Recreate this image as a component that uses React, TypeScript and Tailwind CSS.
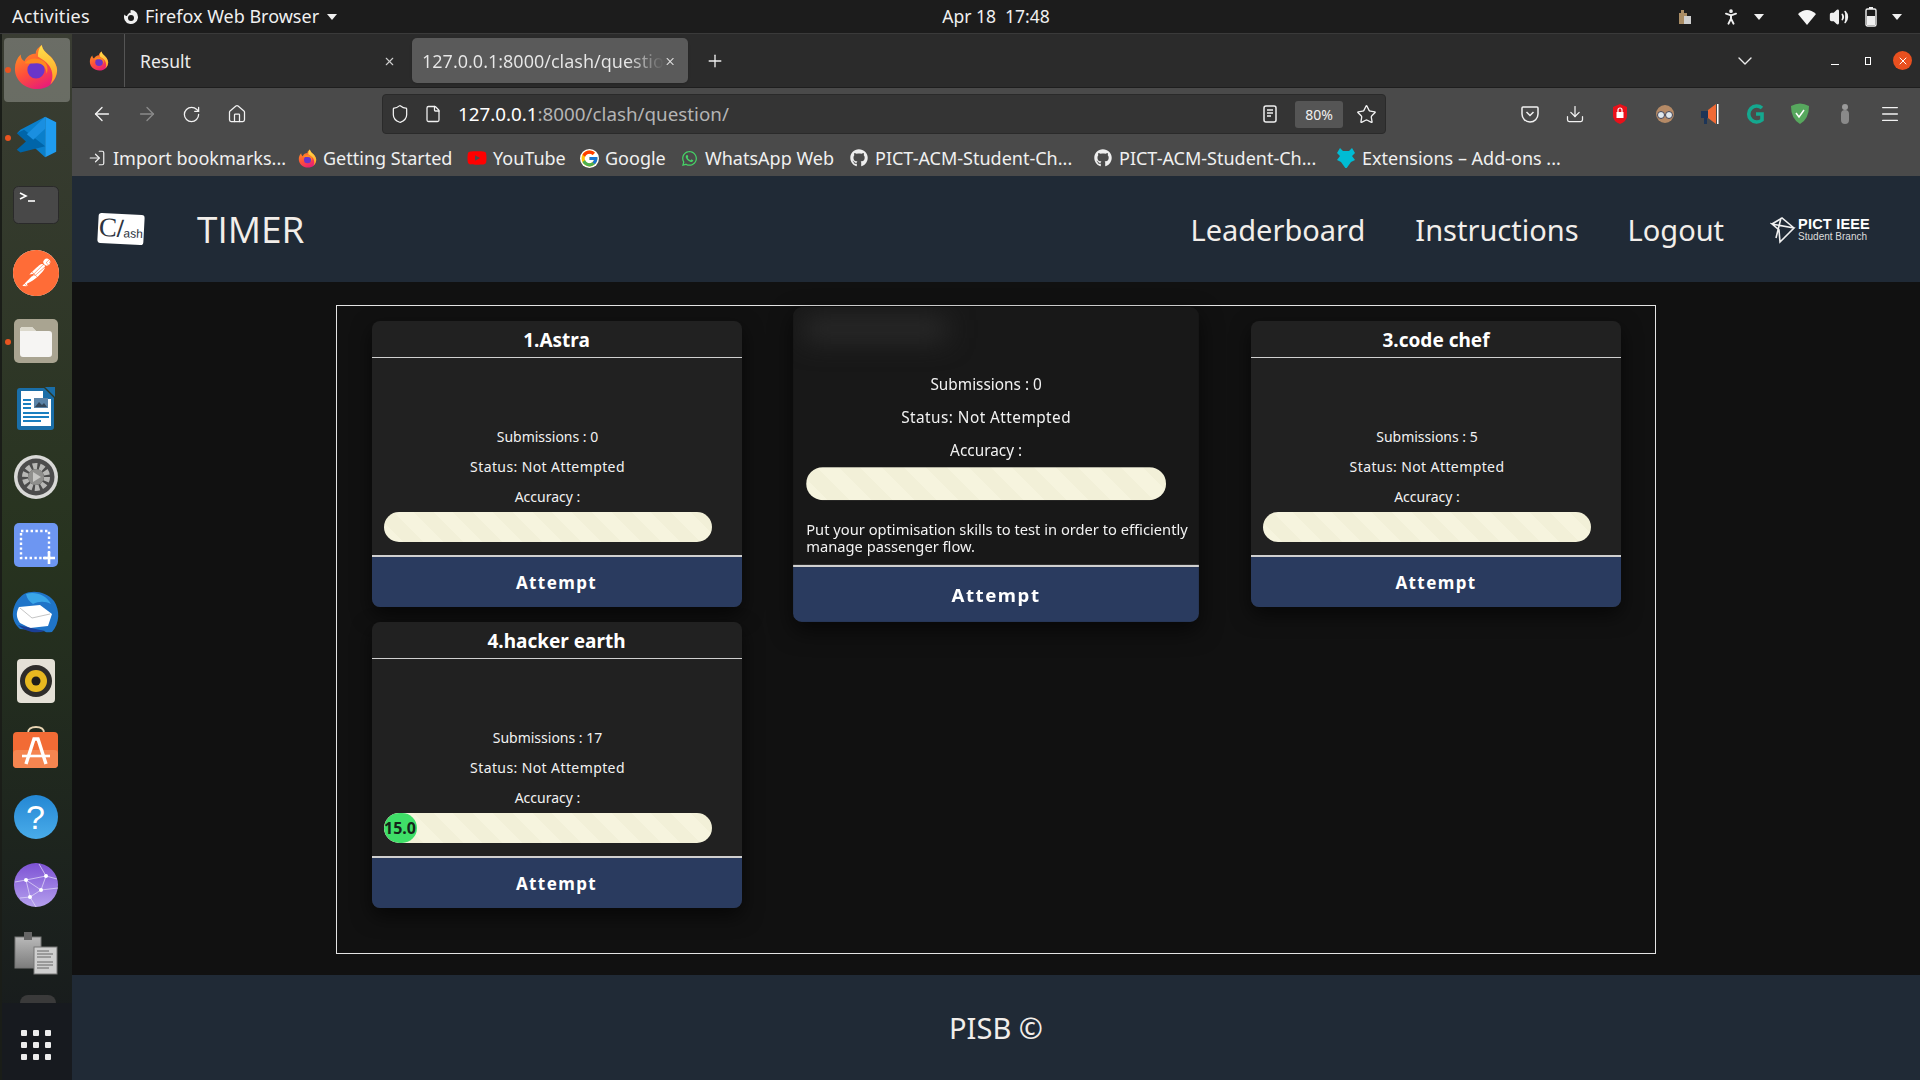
import React from 'react';
import { ArrowLeft, ArrowRight, ChevronDown, Download, File, Home, LogIn, Menu, PersonStanding, Plus, RotateCw, Shield, Star, Volume2, X } from 'lucide-react';
import { FaGithub, FaWhatsapp, FaYoutube } from 'react-icons/fa';
import { FcGoogle } from 'react-icons/fc';
import { SiPostman } from 'react-icons/si';

const Firefox: React.FC<{ size: number }> = ({ size }) => (
  <svg width={size} height={size} viewBox="0 0 48 48">
    <defs>
      <linearGradient id="ffBody" x1="0.2" y1="0" x2="0.7" y2="1">
        <stop offset="0" stopColor="#ff9a1f" />
        <stop offset="0.55" stopColor="#ff4f3a" />
        <stop offset="1" stopColor="#e6197c" />
      </linearGradient>
      <linearGradient id="ffFlame" x1="0.5" y1="0" x2="0.5" y2="1">
        <stop offset="0" stopColor="#ffe14d" />
        <stop offset="1" stopColor="#ff9a1f" />
      </linearGradient>
    </defs>
    <path d="M30 1c1 6 5 8 9 12 5 5 7 11 7 14 0 12-9 20-21 20S2 38 2 26c0-6 2-11 6-15 0 4 2 6 4 7 2-5 7-8 12-8-1-3 2-6 6-9z" fill="url(#ffBody)" />
    <path d="M30 1c1 6 5 8 9 12 5 5 7 11 7 14 0 6-3 11-7 15 3-5 3-13-1-19-3-5-8-7-12-10 0-5 1-9 4-12z" fill="url(#ffFlame)" />
    <circle cx="24" cy="27" r="9" fill="#6a35c9" />
    <path d="M12 20c4-5 13-7 20-2 4 3 5 9 3 13 0-6-4-11-10-11-5 0-9 1-13 0z" fill="#ff8a1f" />
  </svg>
);

const VsCode = () => (
  <svg width="44" height="44" viewBox="0 0 48 48">
    <path d="M34 2 46 8v32l-12 6z" fill="#1f9cf0" />
    <path d="M34 2v44L4 19l-3 3 0 0 6-6z" fill="#0a7fcb" />
    <path d="M34 34 11 16 3 20l10 9-10 9 4 3z" fill="#0065a9" />
    <path d="M34 2 14 21l7 6L34 15z" fill="#1a8fe0" />
  </svg>
);

const Terminal = () => (
  <svg width="46" height="38" viewBox="0 0 46 38">
    <rect x="0.5" y="0.5" width="45" height="37" rx="5" fill="#484848" stroke="#2a2a2a" />
    <path d="M7 7l6 3-6 3" fill="none" stroke="#fff" strokeWidth="1.6" />
    <path d="M15 15h7" stroke="#fff" strokeWidth="1.6" />
  </svg>
);

const Postman = () => (
  <div className="w-[46px] h-[46px] rounded-full bg-white flex items-center justify-center">
    <SiPostman size={46} color="#ff6c37" />
  </div>
);

const Files = () => (
  <svg width="44" height="44" viewBox="0 0 44 44">
    <rect width="44" height="44" rx="5" fill="#a9a491" />
    <path d="M6 11q0-3 3-3h9l4 4h13q3 0 3 3v20q0 3-3 3H9q-3 0-3-3z" fill="#f6f5f3" />
    <path d="M6 12q0-4 3-4h9l4 4z" fill="#dcd9cc" />
  </svg>
);

const Writer = () => (
  <svg width="38" height="44" viewBox="0 0 38 44">
    <path d="M3 1h24l10 10v29q0 3-3 3H3q-3 0-3-3V4q0-3 3-3z" fill="#1a6ea8" />
    <path d="M4 4h22v8h8v27H4z" fill="#fff" />
    <path d="M28 0h10v10z" fill="#1a6ea8" />
    <rect x="6" y="12" width="8" height="2" fill="#1a7fc0" />
    <rect x="6" y="16" width="8" height="2" fill="#1a7fc0" />
    <rect x="6" y="20" width="8" height="2" fill="#1a7fc0" />
    <rect x="17" y="11" width="14" height="10" fill="#5b84a8" />
    <path d="M18 20l4-5 3 3 2-2 3 4z" fill="#33475a" />
    <rect x="6" y="25" width="26" height="2" fill="#1a7fc0" />
    <rect x="6" y="29" width="26" height="2" fill="#1a7fc0" />
    <rect x="6" y="33" width="18" height="2" fill="#1a7fc0" />
  </svg>
);

const SettingsDock = () => (
  <svg width="46" height="46" viewBox="0 0 46 46">
    <circle cx="23" cy="23" r="22" fill="#d9d9d7" />
    <circle cx="23" cy="23" r="18.5" fill="#4c4c4c" />
    <circle cx="23" cy="23" r="11" fill="none" stroke="#b8b8b6" strokeWidth="6" strokeDasharray="4.5 2.4" />
    <circle cx="23" cy="23" r="8" fill="#8f8f8d" />
    <path d="M20 18l8 5-8 5z" fill="#c6c6c4" />
  </svg>
);

const Screenshot = () => (
  <svg width="44" height="44" viewBox="0 0 44 44">
    <rect width="44" height="44" rx="5" fill="#6d96f2" />
    <rect x="7" y="8" width="28" height="27" fill="none" stroke="#fff" strokeWidth="2.4" strokeDasharray="2.4 2.4" />
    <path d="M35 29v12M29 35h12" stroke="#fff" strokeWidth="2.6" />
  </svg>
);

const Thunderbird = () => (
  <svg width="48" height="48" viewBox="0 0 48 48">
    <path d="M12 5c8-4 22-3 30 7 6 9 6 22-2 31-3 0-6 1-8-1l-24-2C3 36 0 29 1 23 2 15 6 9 12 5z" fill="#1f74c8" />
    <path d="M14 5c8-3 20 0 25 10-6-3-12-3-18 0-3-2-6-5-7-10z" fill="#3aa6e8" />
    <path d="M7 18 28 16l12 9-4 12-18 2-10-5C4 29 4 23 7 18z" fill="#fff" />
    <path d="M8 19l12 10 18-4" fill="none" stroke="#b5b5b5" strokeWidth="0.8" />
    <path d="M6 36c8 7 18 9 27 6l-14-3z" fill="#1b3f96" />
  </svg>
);

const Rhythmbox = () => (
  <svg width="38" height="44" viewBox="0 0 38 44">
    <rect width="38" height="44" rx="4" fill="#e4e0d6" />
    <circle cx="19" cy="22" r="16" fill="#2e2c2a" />
    <circle cx="19" cy="22" r="11" fill="#e8b820" />
    <circle cx="19" cy="22" r="4.5" fill="#1f1d1a" />
  </svg>
);

const Software = () => (
  <svg width="46" height="42" viewBox="0 0 46 42" className="mb-[4px]">
    <path d="M15 7q0-6 8-6t8 6" fill="none" stroke="#e9d5b4" strokeWidth="1.8" />
    <rect y="6" width="45" height="36" rx="4" fill="#f26b35" />
    <rect y="24" width="45" height="18" rx="4" fill="#f58550" />
    <path d="M13 38 21 13h4l8 25" fill="none" stroke="#fff" strokeWidth="3.4" />
    <path d="M9 30h28" stroke="#fff" strokeWidth="2.6" />
  </svg>
);

const Help = () => (
  <div className="w-[44px] h-[44px] rounded-full bg-gradient-to-b from-[#2387d4] to-[#49acea] flex items-center justify-center text-white text-[34px] font-['Liberation_Sans',sans-serif] leading-none">
    ?
  </div>
);

const Network = () => (
  <svg width="46" height="46" viewBox="0 0 46 46">
    <defs>
      <linearGradient id="netFill" x1="0" y1="0" x2="0" y2="1">
        <stop offset="0" stopColor="#7d52d4" />
        <stop offset="1" stopColor="#b5a0ee" />
      </linearGradient>
    </defs>
    <circle cx="23" cy="23" r="22" fill="url(#netFill)" />
    <path d="M2 20l11-2 20-4 11 3M13 18l15 10 17-2M13 18l4 17 6 10M28 28 17 35 7 36M33 14l-5 14M33 14 26 2" fill="none" stroke="#ddd3f6" strokeWidth="0.8" />
    <circle cx="13" cy="18" r="2" fill="#fff" />
    <circle cx="33" cy="14" r="2" fill="#fff" />
    <circle cx="28" cy="28" r="2" fill="#fff" />
    <circle cx="17" cy="35" r="2" fill="#fff" />
  </svg>
);

const Clipboard = () => (
  <svg width="44" height="44" viewBox="0 0 44 44">
    <defs>
      <linearGradient id="clipFill" x1="0" y1="0" x2="0" y2="1">
        <stop offset="0" stopColor="#b9b9b9" />
        <stop offset="1" stopColor="#7c7c7c" />
      </linearGradient>
    </defs>
    <rect x="1" y="6" width="26" height="31" fill="url(#clipFill)" stroke="#777" />
    <rect x="10" y="1" width="8" height="8" fill="#666" />
    <rect x="20" y="16" width="23" height="27" fill="#cfcfcf" stroke="#777" />
    <path d="M23 20h12M23 23h16M23 26h14M23 31h16M23 34h16M23 37h12" stroke="#666" strokeWidth="1" />
  </svg>
);

const dockItems: { icon: React.ReactNode; open?: boolean; active?: boolean }[] = [
  { icon: <Firefox size={46} />, open: true, active: true },
  { icon: <VsCode />, open: true },
  { icon: <Terminal /> },
  { icon: <Postman /> },
  { icon: <Files />, open: true },
  { icon: <Writer /> },
  { icon: <SettingsDock /> },
  { icon: <Screenshot /> },
  { icon: <Thunderbird /> },
  { icon: <Rhythmbox /> },
  { icon: <Software /> },
  { icon: <Help /> },
  { icon: <Network /> },
  { icon: <Clipboard /> },
];

const Dock = () => (
  <aside className="w-[72px] shrink-0 flex flex-col border-l-2 border-[#1a1d18] bg-gradient-to-b from-[#3a3d33] via-[#27331f] to-[#16191c]">
    <div className="flex-1 flex flex-col pt-[1px] overflow-hidden">
      {dockItems.map((item, i) => (
        <div key={i} className="h-[68px] shrink-0 flex items-center justify-center relative pr-[3px]">
          {item.active && <div className="absolute left-[2px] right-[2px] top-[3px] bottom-[1px] rounded bg-white/25" />}
          {item.open && <div className="absolute left-[3px] top-[32px] w-[6px] h-[6px] rounded-full bg-[#e95420]" />}
          <div className={item.active ? 'relative mb-[4px]' : 'relative'}>{item.icon}</div>
        </div>
      ))}
    </div>
    <div className="h-[77px] shrink-0 bg-[#171a1f] relative flex items-center justify-center pt-[6px] pr-[3px]">
      <div className="absolute top-[-8px] left-[18px] w-[36px] h-[8px] rounded-t-full bg-[#3a3a3a]" />
      <div className="grid grid-cols-3 gap-[6px]">
        {Array.from({ length: 9 }).map((_, i) => (
          <div key={i} className="w-[6px] h-[6px] rounded-[1px] bg-[#eeeeee]" />
        ))}
      </div>
    </div>
  </aside>
);

const TopBar = () => (
  <div className="h-[34px] shrink-0 bg-[#1c1c1c] border-b border-[#3a3a3a] flex items-center text-[#f0f0f0] text-[18px] relative">
    <span className="ml-[12px] tracking-[0.3px]">Activities</span>
    <svg className="ml-[33px]" width="16" height="18" viewBox="0 0 16 18">
      <path d="M8 2a7 7 0 1 1-6.5 4.4C2.4 7.5 3 8 4 8c.5-2 2-3.4 4-3.6-.8-.8-.8-1.600 0-2.400z" fill="#f0f0f0" />
      <circle cx="8" cy="10" r="3" fill="#1c1c1c" />
    </svg>
    <span className="ml-[6px]">Firefox Web Browser</span>
    <div className="ml-[8px] w-0 h-0 border-x-[5px] border-x-transparent border-t-[6px] border-t-[#f0f0f0]" />
    <span className="absolute left-[942px] w-[108px] text-center text-[17.500px] whitespace-nowrap">Apr 18&nbsp;&nbsp;17:48</span>
    <div className="ml-auto flex items-center pr-[18px]">
      <svg width="14" height="16" viewBox="0 0 14 16" className="mr-[29px]">
        <rect x="1" y="4" width="8" height="11" fill="#a98c64" />
        <rect x="6" y="7" width="7" height="8" fill="#cfcfcf" />
        <rect x="3" y="1" width="3" height="3" fill="#a98c64" />
      </svg>
      <PersonStanding size={20} strokeWidth={2.4} className="mr-[13px]" />
      <div className="mr-[33px] w-0 h-0 border-x-[5px] border-x-transparent border-t-[6px] border-t-[#f0f0f0]" />
      <svg width="20" height="18" viewBox="0 0 20 18" className="mr-[12px]">
        <path d="M10 17 1 6q9-8 18 0z" fill="#f5f5f5" />
      </svg>
      <Volume2 size={20} fill="#f0f0f0" className="mr-[16px]" />
      <svg width="12" height="20" viewBox="0 0 12 20" className="mr-[15px]">
        <rect x="1" y="2" width="10" height="17" rx="1.5" fill="none" stroke="#f0f0f0" strokeWidth="1.4" />
        <rect x="4" y="0" width="4" height="2" fill="#f0f0f0" />
        <rect x="2" y="9" width="8" height="9" fill="#f0f0f0" />
      </svg>
      <div className="w-0 h-0 border-x-[5px] border-x-transparent border-t-[6px] border-t-[#f0f0f0]" />
    </div>
  </div>
);

const TabStrip = () => (
  <div className="h-[54px] shrink-0 bg-[#2b2b2b] border-b border-[#1e1e1e] flex items-center text-[#ececec] text-[17.500px]">
    <div className="w-[53px] h-full border-r border-[#555] flex items-center justify-center pl-[1px] shrink-0">
      <Firefox size={20} />
    </div>
    <div className="w-[287px] flex items-center justify-between pl-[15px] pr-[16px] pt-[1px] shrink-0">
      <span>Result</span>
      <X size={13} className="text-[#cfcfcf]" />
    </div>
    <div className="w-[276px] h-[45px] rounded-[5px] bg-[#5a5a5a] flex items-center pl-[10px] pr-[12px] pt-[1px] shrink-0 shadow">
      <span className="whitespace-nowrap bg-gradient-to-r from-[#e8e8e8] from-[85%] to-[#5a5a5a] bg-clip-text text-transparent text-[18px]">127.0.0.1:8000/clash/questio</span>
      <X size={13} className="ml-auto text-[#e0e0e0]" />
    </div>
    <Plus size={20} strokeWidth={1.6} className="ml-[17px] text-[#eee]" />
    <ChevronDown size={24} strokeWidth={1.4} className="ml-auto mr-[74px]" />
    <div className="w-[8px] h-[1px] bg-white mr-[26px] mt-[8px]" />
    <div className="w-[6px] h-[8px] border border-white mr-[22px] mt-[1px]" />
    <div className="w-[19px] h-[19px] mr-[8px] rounded-full bg-[#e9501f] flex items-center justify-center">
      <X size={12} className="text-white" />
    </div>
  </div>
);

const ToolCell: React.FC<{ children: React.ReactNode }> = ({ children }) => (
  <div className="w-[45px] h-full flex items-center justify-center shrink-0">{children}</div>
);

const Toolbar = () => (
  <div className="h-[52px] shrink-0 bg-[#4a4a4a] flex items-center pl-[7px] text-[#f2f2f2]">
    <ToolCell><ArrowLeft size={22} strokeWidth={1.5} /></ToolCell>
    <ToolCell><ArrowRight size={22} strokeWidth={1.5} className="text-[#8a8a8a]" /></ToolCell>
    <ToolCell><RotateCw size={19} strokeWidth={1.6} /></ToolCell>
    <ToolCell><Home size={20} strokeWidth={1.5} /></ToolCell>
    <div className="ml-[123px] w-[1004px] h-[40px] shrink-0 rounded-[4px] bg-[#343434] border border-[#2a2a2a] flex items-center">
      <Shield size={20} strokeWidth={1.5} className="ml-[7px]" />
      <File size={18} strokeWidth={1.7} className="ml-[14px]" />
      <span className="ml-[16px] text-[18.800px] text-white">127.0.0.1<span className="text-[#b4b4b4]">:8000/clash/question/</span></span>
      <svg width="14" height="18" viewBox="0 0 14 18" className="ml-auto mr-[18px]">
        <rect x="1" y="1" width="12" height="16" rx="2" fill="none" stroke="#eee" strokeWidth="1.5" />
        <path d="M4 5h6M4 8h6M4 11h4" stroke="#eee" strokeWidth="1.3" />
      </svg>
      <div className="w-[48px] h-[27px] rounded-[3px] bg-[#555555] flex items-center justify-center text-[14px] text-[#f0f0f0] mr-[13px]">80%</div>
      <Star size={21} strokeWidth={1.5} className="mr-[8px]" />
    </div>
    <div className="ml-[121px] flex items-center h-full">
      <ToolCell>
        <svg width="18" height="18" viewBox="0 0 18 18">
          <path d="M2 2h14q1 0 1 1v6a8 8 0 0 1-16 0V3q0-1 1-1z" fill="none" stroke="#f2f2f2" strokeWidth="1.5" />
          <path d="M5.500 7 9 10.500 12.500 7" fill="none" stroke="#f2f2f2" strokeWidth="1.5" />
        </svg>
      </ToolCell>
      <ToolCell><Download size={20} strokeWidth={1.5} /></ToolCell>
      <ToolCell>
        <svg width="16" height="20" viewBox="0 0 16 20">
          <path d="M1 3 8 0l7 3v9q0 5-7 8-7-3-7-8z" fill="#e8111a" />
          <rect x="4.500" y="8" width="7" height="6" fill="#fff" />
          <path d="M6 8V6a2 2 0 0 1 4 0v2" fill="none" stroke="#fff" strokeWidth="1.2" />
        </svg>
      </ToolCell>
      <ToolCell>
        <svg width="20" height="22" viewBox="0 0 20 22">
          <circle cx="10" cy="11" r="9" fill="#b58a66" />
          <circle cx="6" cy="12" r="3.500" fill="#dfe8ee" stroke="#445" />
          <circle cx="14" cy="12" r="3.500" fill="#dfe8ee" stroke="#445" />
        </svg>
      </ToolCell>
      <ToolCell>
        <svg width="20" height="22" viewBox="0 0 20 22">
          <path d="M16 1v20L8 15V7z" fill="#f06a35" />
          <rect x="1" y="8" width="7" height="7" fill="#1d3557" />
          <rect x="17" y="1" width="1.500" height="20" fill="#fff" />
          <rect x="4" y="15" width="3" height="6" fill="#1d3557" />
        </svg>
      </ToolCell>
      <ToolCell>
        <svg width="20" height="24" viewBox="0 0 20 24">
          <path d="M17 6A8 8 0 1 0 17 18v-6h-6" fill="none" stroke="#14a88f" strokeWidth="3.600" />
        </svg>
      </ToolCell>
      <ToolCell>
        <svg width="20" height="22" viewBox="0 0 20 22">
          <path d="M1 3q9-5 18 0 0 13-9 18Q1 16 1 3z" fill="#57a85e" />
          <path d="M6 10l3 4 5-7" fill="none" stroke="#fff" strokeWidth="1.500" />
        </svg>
      </ToolCell>
      <ToolCell>
        <svg width="10" height="22" viewBox="0 0 10 22">
          <rect x="1" y="7" width="8" height="14" rx="4" fill="#8a8a8a" />
          <circle cx="5" cy="4" r="3" fill="#9a9a9a" />
        </svg>
      </ToolCell>
      <ToolCell><Menu size={22} strokeWidth={1.5} /></ToolCell>
    </div>
  </div>
);

const bookmarks: { label: string; width: string; icon: React.ReactNode }[] = [
  { label: 'Import bookmarks...', width: 'w-[210px]', icon: <LogIn size={18} strokeWidth={1.6} /> },
  { label: 'Getting Started', width: 'w-[170px]', icon: <Firefox size={19} /> },
  { label: 'YouTube', width: 'w-[112px]', icon: <FaYoutube size={20} color="#f00" /> },
  { label: 'Google', width: 'w-[100px]', icon: <FcGoogle size={19} className="bg-white rounded-full" /> },
  { label: 'WhatsApp Web', width: 'w-[170px]', icon: <FaWhatsapp size={17} color="#45d366" /> },
  { label: 'PICT-ACM-Student-Ch...', width: 'w-[244px]', icon: <FaGithub size={18} color="#eee" /> },
  { label: 'PICT-ACM-Student-Ch...', width: 'w-[243px]', icon: <FaGithub size={18} color="#eee" /> },
  {
    label: 'Extensions – Add-ons ...',
    width: 'w-[240px]',
    icon: (
      <svg width="18" height="20" viewBox="0 0 18 20">
        <path d="M3 0l3 3h6l3-3 3 5-3 3 3 4-4 2-5 7-5-7-4-2 3-4-3-3z" fill="#00bcd4" />
      </svg>
    ),
  },
];

const Bookmarks = () => (
  <div className="h-[36px] shrink-0 bg-[#4a4a4a] flex items-center pl-[15px] text-[18px] leading-[24px] text-[#f0f0f0]">
    {bookmarks.map((b, i) => (
      <div key={i} className={`${b.width} shrink-0 flex items-center gap-[6px] whitespace-nowrap`}>
        <span className="w-[20px] flex justify-center shrink-0">{b.icon}</span>
        <span>{b.label}</span>
      </div>
    ))}
  </div>
);

const Logo = () => (
  <div className="w-[46px] h-[30px] bg-white rounded-[3px] rotate-[3deg] flex items-baseline justify-center text-[#2d3440] font-['Liberation_Serif',serif] leading-none">
    <span className="text-[27px] mt-[1px]">C</span>
    <span className="text-[24px] font-['Liberation_Sans',sans-serif] font-light">/</span>
    <span className="text-[12px] font-['Liberation_Sans',sans-serif]">ash</span>
  </div>
);

const IeeeLogo = () => (
  <div className="flex items-center gap-[2px] text-white font-['Liberation_Sans',sans-serif]">
    <svg width="26" height="28" viewBox="0 0 26 28">
      <path d="M2 8l22 4-14 14L9 14 2 8zM2 8l10-6 12 10M6 22l5-20M10 26l10-10" fill="none" stroke="#f0f0f0" strokeWidth="1.600" />
    </svg>
    <div className="flex flex-col leading-none">
      <span className="text-[14.500px] font-bold tracking-[0.2px]">PICT IEEE</span>
      <span className="text-[10px] mt-[1px] text-[#dddddd]">Student Branch</span>
    </div>
  </div>
);

const Header = () => (
  <header className="h-[106px] shrink-0 bg-[#202a36] flex items-center text-[#f2eeea] text-[29px]">
    <div className="ml-[26px] w-[99px] shrink-0"><Logo /></div>
    <span className="text-[37px] font-['Open_Sans',sans-serif]">TIMER</span>
    <nav className="ml-auto flex items-center mr-[50px] pt-[1px]">
      <a>Leaderboard</a>
      <a className="ml-[50px]">Instructions</a>
      <a className="ml-[49px]">Logout</a>
      <div className="ml-[46px]"><IeeeLogo /></div>
    </nav>
  </header>
);

const Bar: React.FC<{ value?: string }> = ({ value }) => (
  <div className="h-[30px] w-full rounded-full overflow-hidden bg-[#f6f4de] bg-[repeating-linear-gradient(45deg,#f6f4de_0,#f6f4de_14px,#f2f0d8_14px,#f2f0d8_28px)]">
    {value && (
      <div className="w-[33px] h-full rounded-full bg-[#3fdf68] flex items-center justify-center text-[#15251a] text-[16px] font-bold leading-none">
        {value}
      </div>
    )}
  </div>
);

const AttemptBtn = () => (
  <div className="h-[50px] shrink-0 bg-[#2a3b5f] flex items-center justify-center text-white text-[17px] font-bold tracking-[1.4px] pt-[1px]">
    Attempt
  </div>
);

const Stats: React.FC<{ submissions: number; value?: string }> = ({ submissions, value }) => (
  <div className="w-[328px] text-center text-[14px] text-[#f2f2f2]">
    <div className="h-[30px] leading-[30px]">Submissions : {submissions}</div>
    <div className="h-[30px] leading-[30px] tracking-[0.4px]">Status: Not Attempted</div>
    <div className="h-[30px] leading-[30px]">Accuracy :</div>
    <Bar value={value} />
  </div>
);

const Card: React.FC<{ title: string; submissions: number; value?: string }> = ({ title, submissions, value }) => (
  <div className="w-[370px] h-[286px] mx-auto flex flex-col rounded-lg overflow-hidden bg-[#212121] shadow-[0_8px_20px_rgba(0,0,0,0.6)]">
    <div className="h-[37px] shrink-0 border-b border-[#d0d0d0] pt-[2px] flex items-center justify-center text-[19px] font-bold text-white">
      {title}
    </div>
    <div className="flex-1 border-b-2 border-[#d0d0d0] pl-[12px] pt-[64px]">
      <Stats submissions={submissions} value={value} />
    </div>
    <AttemptBtn />
  </div>
);

// the second card is captured mid hover: zoomed, title blurred, description shown
const HoverCard = () => (
  <div className="w-[370px] h-[287px] mb-[-1px] mx-auto flex flex-col rounded-lg overflow-hidden bg-[#181818] scale-[1.097] shadow-[0_8px_20px_rgba(0,0,0,0.6)]">
    <div className="h-[56px] shrink-0 pl-[10px] pt-[10px]">
      <div className="w-[130px] h-[20px] bg-[#2c2c2c] blur-md" />
    </div>
    <div className="flex-1 border-b-2 border-[#d0d0d0] pl-[12px]">
      <Stats submissions={0} />
      <p className="mt-[20px] pr-[10px] text-[13.400px] leading-[15px] text-[#f2f2f2] whitespace-nowrap">
        Put your optimisation skills to test in order to efficiently<br />manage passenger flow.
      </p>
    </div>
    <AttemptBtn />
  </div>
);

const Main = () => (
  <main className="flex-1 bg-[#111111] pt-[23px]">
    <div className="mx-auto w-[1320px] h-[649px] border border-[#e4e4e4] pt-[15px]">
      <div className="grid grid-cols-[439px_440px_439px] gap-y-[15px]">
        <Card title="1.Astra" submissions={0} />
        <HoverCard />
        <div className="pl-[1px]"><Card title="3.code chef" submissions={5} /></div>
        <Card title="4.hacker earth" submissions={17} value="15.0" />
      </div>
    </div>
  </main>
);

export default function App() {
  return (
    <div className="w-[1920px] h-[1080px] overflow-hidden flex flex-col bg-[#111111] font-['Noto_Sans',sans-serif]">
      <TopBar />
      <div className="flex-1 flex min-h-0">
        <Dock />
        <div className="flex-1 flex flex-col min-w-0">
          <TabStrip />
          <Toolbar />
          <Bookmarks />
          <Header />
          <Main />
          <footer className="h-[105px] shrink-0 bg-[#202a36] flex items-center justify-center text-[29px] text-[#f2eeea]">
            PISB ©
          </footer>
        </div>
      </div>
    </div>
  );
}
